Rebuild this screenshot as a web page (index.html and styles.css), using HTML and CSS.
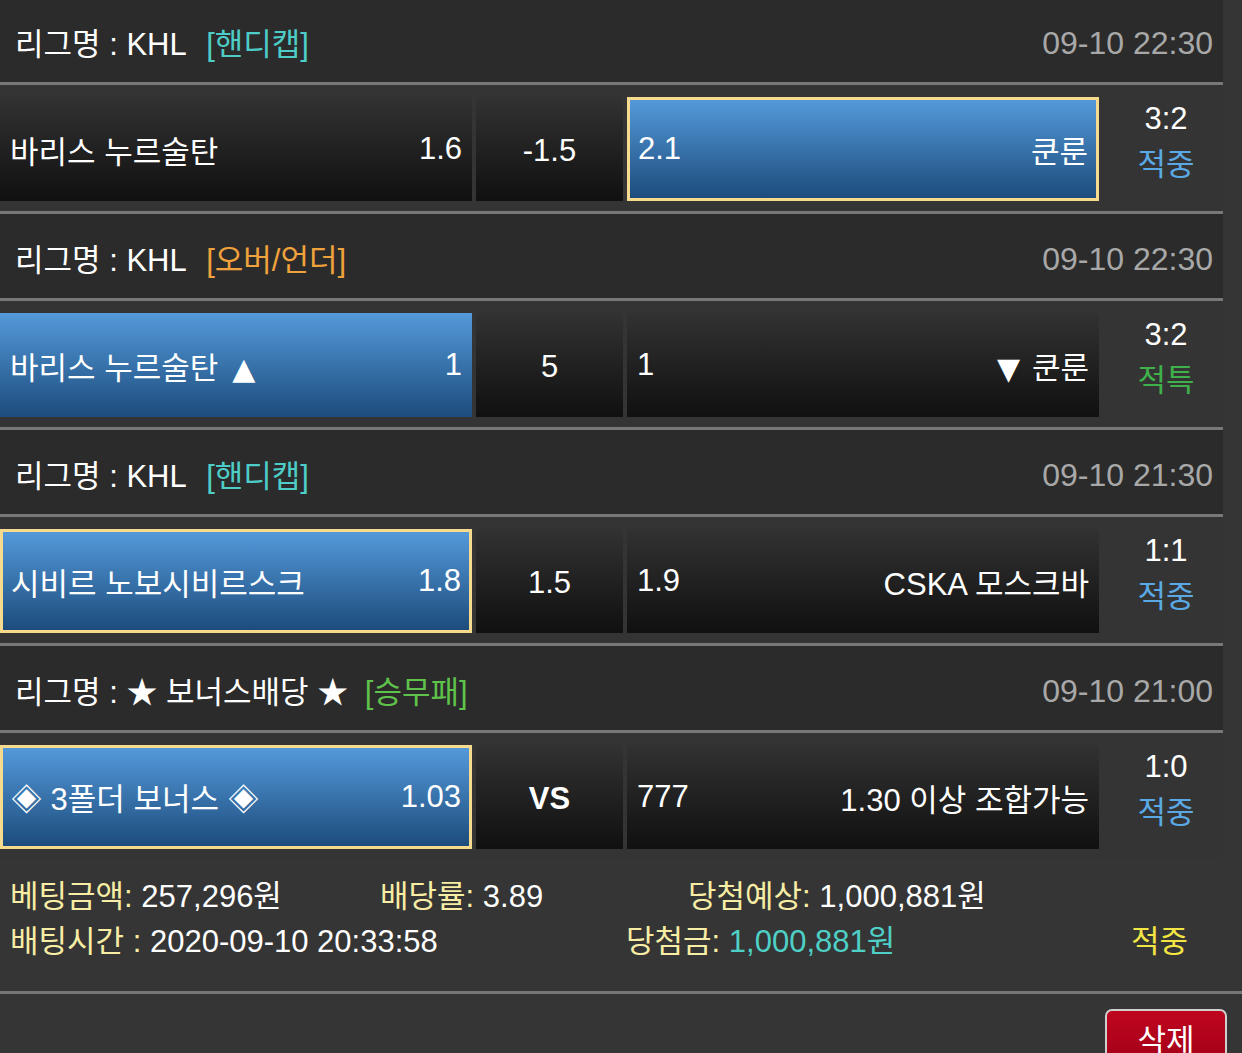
FILE: index.html
```html
<!DOCTYPE html>
<html lang="ko">
<head>
  <meta charset="UTF-8" />
  <meta name="viewport" content="width=device-width, initial-scale=1" />
  <title>베팅내역</title>
  <link rel="stylesheet" href="styles.css">
</head>
<body>
  <div class="games">

    <div class="league-head">
      <div class="league">리그명 : KHL <span class="type handi">[핸디캡]</span></div>
      <div class="time">09-10 22:30</div>
    </div>
    <div class="bet-row">
      <div class="pick side"><span>바리스 누르술탄</span><span>1.6</span></div>
      <div class="pick mid">-1.5</div>
      <div class="pick side blue sel"><span>2.1</span><span>쿤룬</span></div>
      <div class="result"><div>3:2</div><div class="hit">적중</div></div>
    </div>

    <div class="league-head">
      <div class="league">리그명 : KHL <span class="type ou">[오버/언더]</span></div>
      <div class="time">09-10 22:30</div>
    </div>
    <div class="bet-row">
      <div class="pick side blue"><span>바리스 누르술탄<span class="tri up">▲</span></span><span>1</span></div>
      <div class="pick mid">5</div>
      <div class="pick side"><span>1</span><span><span class="tri down">▼</span>쿤룬</span></div>
      <div class="result"><div>3:2</div><div class="void">적특</div></div>
    </div>

    <div class="league-head">
      <div class="league">리그명 : KHL <span class="type handi">[핸디캡]</span></div>
      <div class="time">09-10 21:30</div>
    </div>
    <div class="bet-row">
      <div class="pick side blue sel"><span>시비르 노보시비르스크</span><span>1.8</span></div>
      <div class="pick mid">1.5</div>
      <div class="pick side"><span>1.9</span><span>CSKA 모스크바</span></div>
      <div class="result"><div>1:1</div><div class="hit">적중</div></div>
    </div>

    <div class="league-head">
      <div class="league">리그명 : ★ 보너스배당 ★ <span class="type wdl tight">[승무패]</span></div>
      <div class="time">09-10 21:00</div>
    </div>
    <div class="bet-row last">
      <div class="pick side blue sel"><span>◈ 3폴더 보너스 ◈</span><span>1.03</span></div>
      <div class="pick mid vs">VS</div>
      <div class="pick side"><span>777</span><span>1.30 이상 조합가능</span></div>
      <div class="result"><div>1:0</div><div class="hit">적중</div></div>
    </div>

  </div>

  <div class="summary">
    <div class="sum-line">
      <div class="c1"><span class="lbl">베팅금액:</span> 257,296원</div>
      <div class="c2"><span class="lbl">배당률:</span> 3.89</div>
      <div class="c3"><span class="lbl">당첨예상:</span> 1,000,881원</div>
    </div>
    <div class="sum-line">
      <div class="c4"><span class="lbl">배팅시간 :</span> 2020-09-10 20:33:58</div>
      <div class="c5"><span class="lbl">당첨금:</span> <span class="won">1,000,881원</span></div>
      <div class="c6">적중</div>
    </div>
  </div>

  <div class="foot">
    <button class="del">삭제</button>
  </div>
</body>
</html>
```

FILE: styles.css
```css
body {
  margin: 0; background: #353535; color: #fff;
  font-family: "Liberation Sans", "Noto Sans CJK KR", sans-serif;
  font-size: 31px; overflow: hidden;
}
.games { width: 1223px; margin-top: -2px; }

.league-head {
  height: 84px; background: #2b2b2b;
  border-bottom: 3px solid #777;
  display: flex; align-items: center; justify-content: space-between;
  padding: 0 10px 0 15px; box-sizing: content-box;
}
.league { white-space: nowrap; padding-top: 2px; }
.type { margin-left: 12px; }
.type.tight { margin-left: 8px; }
.handi { color: #4ecdc8; }
.ou { color: #f0a23c; }
.wdl { color: #5fc24a; }
.time { color: #a8a8a8; padding-top: 6px; font-size: 32px; }

.bet-row {
  box-sizing: border-box; background: #343434;
  border-bottom: 3px solid #777; height: 129px;
  padding: 12px 0 10px; display: flex; gap: 4px;
}
.bet-row.last { border-bottom: none; height: 126px; }

.pick {
  height: 104px; box-sizing: border-box;
  background: linear-gradient(#323232, #101010);
  display: flex; align-items: center; white-space: nowrap;
}
.side { width: 472px; justify-content: space-between; padding: 0 10px; }
.mid { width: 147px; justify-content: center; padding-top: 4px; }
.vs { font-weight: bold; }
.blue { background: linear-gradient(#5499da, #1c4c7c); }
.sel { border: 3px solid #f6da8e; padding: 0 8px; }
.tri { font-family: "DejaVu Sans", sans-serif; font-size: 30px; }
.tri.up { margin-left: 14px; }
.tri.down { margin-right: 12px; }

.result {
  flex: 1; display: flex; flex-direction: column; align-items: center;
  justify-content: center; line-height: 46px; padding: 0 0 14px 6px;
}
.hit { color: #5aa8e4; }
.void { color: #3fb04a; }

.summary {
  box-sizing: content-box; background: #353535;
  border-bottom: 3px solid #777; padding-top: 12px; height: 120px;
}
.sum-line { display: flex; height: 45px; align-items: center; white-space: nowrap; }
.lbl { color: #f7eda4; }
.c1 { margin-left: 10px; width: 370px; }
.c2 { width: 308px; }
.c4 { margin-left: 10px; width: 616px; }
.c5 { width: 505px; }
.c6 { color: #f2e544; }
.won { color: #4ed0c6; }

.foot { display: flex; justify-content: flex-end; padding: 15px 15px 0 0; }
.del {
  width: 122px; height: 60px; border: 2px solid #cfcfcf; border-radius: 7px;
  background: linear-gradient(#c0061f, #a00018); color: #fff;
  font: inherit; padding: 4px 0 0; display: flex; justify-content: center; align-items: flex-start;
}
```
